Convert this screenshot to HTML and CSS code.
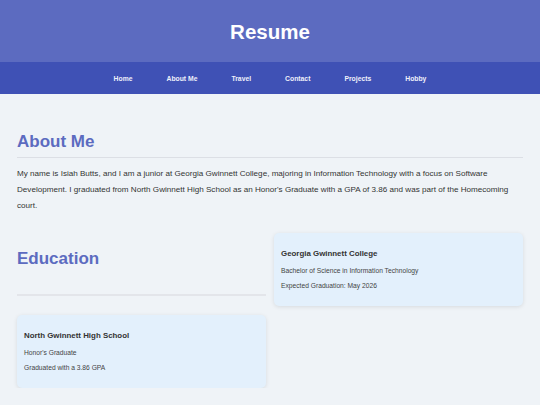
FILE: index.html
```html
<!DOCTYPE html>
<html lang="en">

<head>
    <meta charset="UTF-8">
    <meta name="viewport" content="width=device-width, initial-scale=1.0">
    <title>Resume</title>
    <link rel="stylesheet" href="styles.css">
</head>

<body>
    <header class="site-header">
        <h1>Resume</h1>
    </header>
    <nav class="site-nav">
        <a href="#">Home</a>
        <a href="#">About Me</a>
        <a href="#">Travel</a>
        <a href="#">Contact</a>
        <a href="#">Projects</a>
        <a href="#">Hobby</a>
    </nav>

    <main class="content">
        <section class="about">
            <h2>About Me</h2>
            <p>My name is Isiah Butts, and I am a junior at Georgia Gwinnett College, majoring in Information Technology with a focus on Software Development. I graduated from North Gwinnett High School as an Honor's Graduate with a GPA of 3.86 and was part of the Homecoming court.</p>
        </section>

        <section class="education">
            <h2>Education</h2>
            <div class="card">
                <h3>Georgia Gwinnett College</h3>
                <p>Bachelor of Science in Information Technology</p>
                <p>Expected Graduation: May 2026</p>
            </div>
            <div class="card">
                <h3>North Gwinnett High School</h3>
                <p>Honor's Graduate</p>
                <p>Graduated with a 3.86 GPA</p>
            </div>
        </section>
    </main>
</body>

</html>
```

FILE: styles.css
```css
:root {
    --primary-color: #5C6BC0;
    --nav-color: #3F51B5;
    --card-color: #E3F0FC;
    --text-color: #333;
}

body {
    font-family: 'Liberation Sans', Arial, sans-serif;
    margin: 0;
    background-color: #EFF3F7;
    color: var(--text-color);
}

.site-header {
    height: 62px;
    display: flex;
    justify-content: center;
    align-items: center;
    background-color: var(--primary-color);
    color: white;
}

.site-header h1 {
    margin: 2px 0 0;
    font-size: 20.5px;
    line-height: 28px;
}

.site-nav {
    height: 32px;
    display: flex;
    justify-content: center;
    align-items: center;
    background-color: var(--nav-color);
}

.site-nav a {
    margin: 0 17px;
    font-size: 6.8px;
    font-weight: bold;
    color: #EEF0FA;
    text-decoration: none;
}

.content {
    padding: 22px 17px 0;
}

.about h2,
.education h2 {
    margin: 15px 0 0;
    font-size: 17px;
    line-height: 21px;
    color: var(--primary-color);
}

.about h2 {
    padding-bottom: 5px;
    border-bottom: 1px solid #DCDFE5;
}

.about p {
    margin: 8px 0 0;
    font-size: 8.1px;
    line-height: 16.2px;
}

/* 标题和两张卡片排成两列 */
.education {
    display: grid;
    grid-template-columns: 1fr 1fr;
    column-gap: 8px;
    row-gap: 9px;
    margin-top: 18px;
}

.education h2 {
    margin-bottom: 10px;
    border-bottom: 2px solid #E3E5EA;
}

.card {
    padding: 8px 7px 9px;
    background-color: var(--card-color);
    border-radius: 5px;
    box-shadow: 0 1px 4px rgba(0, 0, 0, 0.1);
}

.card h3 {
    margin: 7px 0 8px;
    font-size: 7.9px;
    line-height: 11px;
}

.card p {
    margin: 0 0 7px;
    font-size: 6.7px;
    line-height: 8px;
    color: #444;
}
```
